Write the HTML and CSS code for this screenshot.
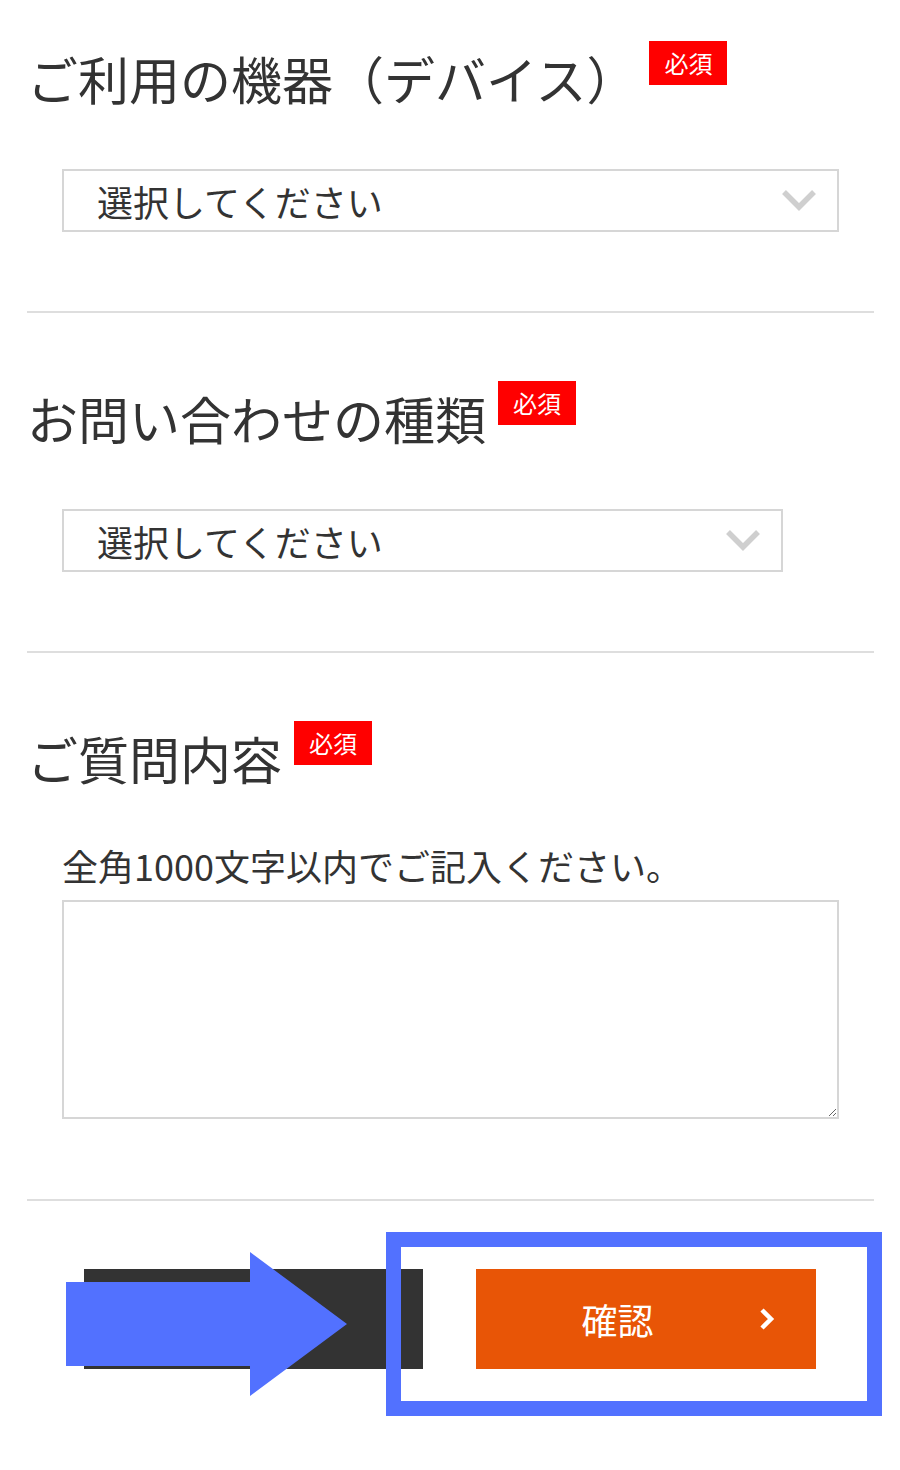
FILE: index.html
```html
<!DOCTYPE html>
<html lang="ja">
<head>
    <meta charset="UTF-8">
    <meta name="viewport" content="width=device-width, initial-scale=1.0">
    <title>お問い合わせ</title>
    <link rel="stylesheet" href="styles.css">
</head>
<body>

<div class="form">
    <div class="field field-first">
        <h2 class="field-title">ご利用の機器（デバイス）<span class="required">必須</span></h2>
        <div class="select-wrap select-wide">
            <select id="device">
                <option value="">選択してください</option>
                <option value="pc">パソコン</option>
                <option value="phone">スマートフォン</option>
                <option value="tablet">タブレット</option>
            </select>
            <svg class="chevron" viewBox="0 0 36 22"><polyline points="3,3 18,18 33,3"/></svg>
        </div>
    </div>

    <div class="field">
        <h2 class="field-title">お問い合わせの種類<span class="required">必須</span></h2>
        <div class="select-wrap select-narrow">
            <select id="inquiryType">
                <option value="">選択してください</option>
                <option value="1">サービスについて</option>
                <option value="2">不具合について</option>
                <option value="3">その他</option>
            </select>
            <svg class="chevron" viewBox="0 0 36 22"><polyline points="3,3 18,18 33,3"/></svg>
        </div>
    </div>

    <div class="field">
        <h2 class="field-title">ご質問内容<span class="required">必須</span></h2>
        <p class="note">全角1000文字以内でご記入ください。</p>
        <textarea id="question"></textarea>
    </div>
</div>

<div class="actions">
    <button class="btn-back" aria-label="戻る"></button>
    <button class="btn-confirm">
        <span class="label">確認</span>
        <svg class="btn-arrow" viewBox="0 0 16 24"><polyline points="3,3 12,12 3,21"/></svg>
    </button>

    <svg class="mark-arrow" viewBox="0 0 281 144"><polygon points="0,30 184,30 184,0 281,72 184,144 184,114 0,114"/></svg>
    <div class="mark-frame"></div>
</div>

</body>
</html>
```

FILE: styles.css
```css
body {
    margin: 0;
    background-color: #fff;
    font-family: "Noto Sans CJK JP", "Noto Sans", sans-serif;
    color: #333;
}

.form {
    padding: 0 26px 0 27px;
}

.field {
    padding: 68px 0 79px;
    border-bottom: 2px solid #dedede;
}

.field-first {
    padding-top: 41px;
}

.field:last-child {
    padding-bottom: 80px;
}

.field-title {
    display: flex;
    align-items: flex-start;
    margin: 0 0 54px;
    font-size: 51px;
    line-height: 74px;
    font-weight: 400;
    white-space: nowrap;
}

.required {
    display: inline-block;
    width: 78px;
    height: 44px;
    margin-left: 12px;
    background-color: #ff0000;
    color: #fff;
    font-size: 24px;
    line-height: 44px;
    text-align: center;
}

.select-wrap {
    position: relative;
    height: 63px;
    margin-left: 35px;
}

.select-wide {
    width: 777px;
}

.select-narrow {
    width: 721px;
}

select {
    -webkit-appearance: none;
    appearance: none;
    width: 100%;
    height: 100%;
    box-sizing: border-box;
    padding: 0 0 0 33px;
    border: 2px solid #d6d6d6;
    border-radius: 0;
    background-color: #fff;
    color: #333;
    font-family: inherit;
    font-size: 36px;
    outline: none;
}

.chevron {
    position: absolute;
    right: 22px;
    top: 20px;
    width: 36px;
    height: 22px;
    pointer-events: none;
}

.chevron polyline {
    fill: none;
    stroke: #cfcfcf;
    stroke-width: 5.5;
}

.note {
    margin: -8px 0 11px 35px;
    font-size: 36px;
    line-height: 48px;
}

textarea {
    display: block;
    width: 777px;
    height: 219px;
    margin-left: 35px;
    box-sizing: border-box;
    border: 2px solid #d6d6d6;
    border-radius: 0;
    font-family: inherit;
    font-size: 30px;
    outline: none;
}

.actions {
    position: relative;
    display: flex;
    justify-content: center;
    gap: 53px;
    margin-top: 68px;
    margin-bottom: 100px;
}

.actions button {
    height: 100px;
    border: none;
    border-radius: 0;
    cursor: pointer;
    font-family: inherit;
}

.btn-back {
    width: 339px;
    background-color: #333;
}

.btn-confirm {
    display: flex;
    align-items: center;
    width: 340px;
    padding: 0 41px 0 0;
    background-color: #e85506;
    color: #fff;
    font-size: 36px;
}

.btn-confirm .label {
    flex: 1;
    text-align: center;
}

.btn-arrow {
    width: 16px;
    height: 26px;
}

.btn-arrow polyline {
    fill: none;
    stroke: #fff;
    stroke-width: 4.5;
}

.mark-arrow {
    position: absolute;
    left: 66px;
    top: -17px;
    width: 281px;
    height: 144px;
}

.mark-arrow polygon {
    fill: #5271ff;
}

.mark-frame {
    position: absolute;
    left: 386px;
    top: -37px;
    width: 496px;
    height: 184px;
    box-sizing: border-box;
    border: 15px solid #5271ff;
}
```
